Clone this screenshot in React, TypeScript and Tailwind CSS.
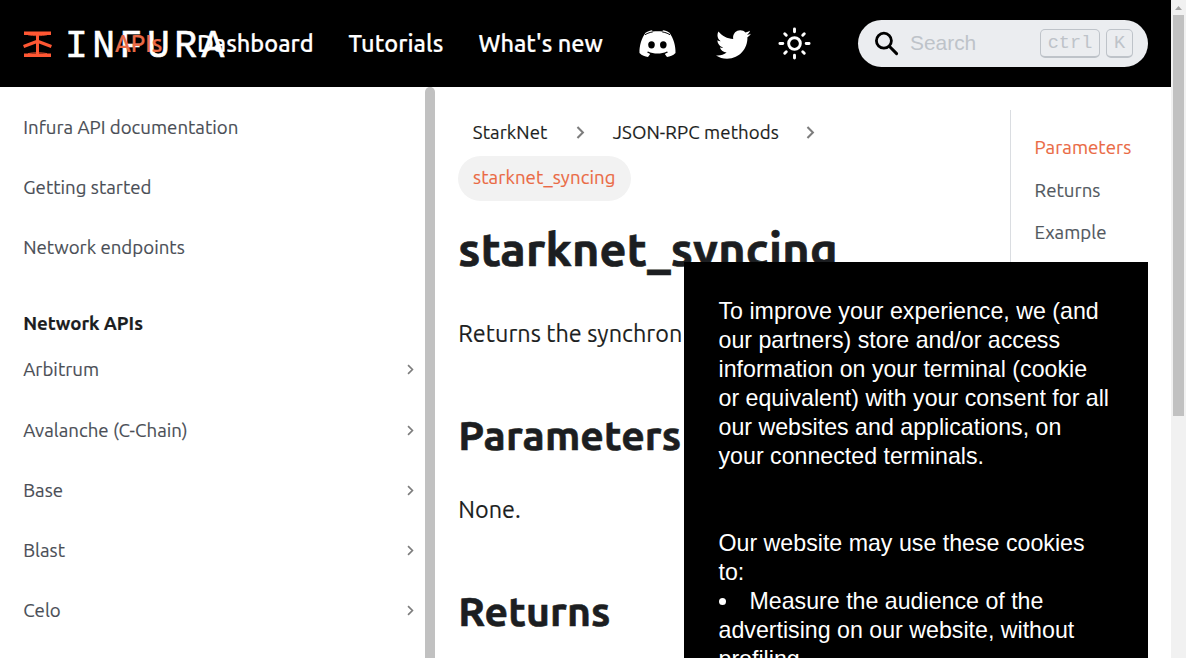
import { FaTwitter } from "react-icons/fa";

const topLinks = [
  { label: "Infura API documentation" },
  { label: "Getting started" },
  { label: "Network endpoints" },
];
const networks = ["Arbitrum", "Avalanche (C-Chain)", "Base", "Blast", "Celo"];

function InfuraMark() {
  return (
    <svg className="h-[26px] w-[30px] shrink-0" viewBox="0 0 30 26" fill="none" stroke="#ff5733" strokeWidth="3.400">
      <path d="M1 2.200H28M1 24.200H28" />
      <path d="M14.500 2V24" strokeWidth="3" />
      <path d="M.6 15.400L14.500 10.300L28.400 15.400" strokeWidth="3.200" />
      <path d="M5 3.800C10 5 19 5 24 3.800M5 22.600C10 21.400 19 21.400 24 22.600" strokeWidth=".8" />
    </svg>
  );
}

function DiscordIcon() {
  return (
    <svg className="h-[27px] w-[37px]" viewBox="0 0 37 27" fill="#fff">
      <path d="M6.500 2.800C9 1.200 11.500 .3 13 .3L13.800 1.500C17 1.100 20 1.100 23.200 1.500L24 .3C26 .3 28.500 1.200 30.500 2.800C34.500 8.500 36.800 16 36.500 23C34 25.500 31 26.700 28 26.900L25.800 24L29 22.200L28 21.400C22 24.100 15 24.100 9 21.400L8 22.200L11.200 24L9 26.900C6 26.700 3 25.500 .5 23C.2 16 2.500 8.500 6.500 2.800Z" />
      <ellipse cx="12.500" cy="14.800" rx="3.300" ry="3.600" fill="#000" />
      <ellipse cx="24.300" cy="14.800" rx="3.300" ry="3.600" fill="#000" />
      <path d="M6 4.700C9 3 11 2.400 13.800 1.900M31 4.700C28 3 26 2.400 23.200 1.900" stroke="#000" strokeWidth="1" fill="none" />
    </svg>
  );
}

function SunIcon() {
  return (
    <svg className="size-[35px]" viewBox="0 0 24 24" fill="none" stroke="#fff" strokeWidth="2" strokeLinecap="round">
      <circle cx="12" cy="12" r="4" />
      <path d="M12 2v2M12 20v2M2 12h2M20 12h2M5.300 5.300l1.060 1.060M17.640 17.640l1.060 1.060M5.300 18.700l1.060-1.060M17.640 6.360l1.060-1.060" />
    </svg>
  );
}

function SearchBox() {
  return (
    <div className="ml-[46px] flex h-[47px] w-[290px] items-center rounded-full bg-[#ebedf0] pl-[16px] pr-[15px] text-[#bec3c9]">
      <svg className="h-[25px] w-[25px]" viewBox="0 0 25 25" fill="none" stroke="#000">
        <circle cx="9.900" cy="9.700" r="7.500" strokeWidth="2.800" />
        <path d="M15.300 15.300L22.600 22.600" strokeWidth="3" strokeLinecap="round" />
      </svg>
      <span className="ml-[11px] flex-1 font-['Liberation_Sans',sans-serif] text-[20.900px] font-normal leading-none">Search</span>
      <div className="flex gap-[6px] font-normal text-[18.600px] leading-[27px]">
        <kbd className="h-[29px] w-[60px] rounded-[5px] border border-b-2 border-[#bec3c9] text-center font-['Liberation_Mono',monospace]">ctrl</kbd>
        <kbd className="h-[29px] w-[27px] rounded-[5px] border border-b-2 border-[#bec3c9] text-center font-['Liberation_Mono',monospace]">K</kbd>
      </div>
    </div>
  );
}

function Header() {
  return (
    <header className="flex h-[87px] items-center bg-black pl-[23px] text-[23.500px] font-medium text-white">
      <div className="flex w-[92px] shrink-0 items-center">
        <InfuraMark />
        <span className="ml-[12px] mt-[6px] whitespace-nowrap font-['Liberation_Mono',monospace] text-[38px] font-normal leading-none tracking-[4.500px] [-webkit-text-stroke:0.600px_white]">INFURA</span>
      </div>
      <nav className="relative flex items-center whitespace-nowrap [-webkit-text-stroke:0.200px_currentColor]">
        <a className="w-[82px] text-[#ea6a45]">APIs</a>
        <a className="w-[151.500px]">Dashboard</a>
        <a className="w-[130px] tracking-[0.060px]">Tutorials</a>
        <a className="w-[160.500px]">What's new</a>
        <DiscordIcon />
        <FaTwitter className="ml-[39.500px] mt-[2px] size-[35px]" />
        <span className="ml-[26.500px]"><SunIcon /></span>
      </nav>
      <SearchBox />
    </header>
  );
}

function Chevron({ className }: { className: string }) {
  return (
    <svg className={className} viewBox="0 0 8 12" fill="none" stroke="#7d7d7d" strokeWidth="1.900">
      <path d="M1.200 1L6.200 6L1.200 11" />
    </svg>
  );
}

function Sidebar() {
  return (
    <aside className="flex w-[435px] shrink-0">
      <div className="flex-1 pt-[10.700px] text-[18.650px] tracking-[0.020px] text-[#4a4e56] [-webkit-text-stroke:0.150px_currentColor]">
        {topLinks.map((l) => (
          <a key={l.label} className="flex h-[60.300px] items-center pl-[23.200px]">{l.label}</a>
        ))}
        <div className="flex h-[61.500px] items-center pl-[23.200px] pt-[29px] font-semibold tracking-[-0.050px] text-[#1c1e21]">Network APIs</div>
        {networks.map((n) => (
          <a key={n} className="flex h-[60.300px] items-center justify-between pl-[23.200px] pr-[11px]">
            {n}
            <Chevron className="mb-[1px] h-[11px] w-[7px]" />
          </a>
        ))}
      </div>
      <div className="w-[10px] rounded-t-[5px] bg-[#c1c1c1]" />
    </aside>
  );
}

function Article() {
  return (
    <article className="w-[552px] shrink-0 pl-[23.300px] pt-[23px] text-[#1c1e21] [-webkit-text-stroke:0.150px_currentColor]">
      <div className="flex h-[45px] items-center text-[18.650px] tracking-[0.080px]">
        <span className="w-[117.500px] pl-[14.500px]">StarkNet</span>
        <Chevron className="h-[13px] w-[9px]" />
        <span className="ml-[28px] w-[193px]">JSON-RPC methods</span>
        <Chevron className="h-[13px] w-[9px]" />
      </div>
      <div className="mt-[1px] flex">
        <span className="-ml-[0.300px] flex h-[45px] items-center rounded-full bg-[#f2f2f2] px-[15px] pb-[2px] text-[18.650px] tracking-[0.090px] text-[#ea6a45]">starknet_syncing</span>
      </div>
      <h1 className="mt-[19px] text-[46.900px] font-bold leading-[58px] tracking-[0.200px] [-webkit-text-stroke:0.700px_currentColor]">starknet_syncing</h1>
      <p className="mt-[36px] w-[224.500px] overflow-hidden whitespace-nowrap text-[23.400px] leading-[38px] tracking-[0.030px]">Returns the synchron</p>
      <h2 className="mt-[58px] text-[41px] font-bold leading-[51px] tracking-[0.080px] [-webkit-text-stroke:0.600px_currentColor]">Parameters</h2>
      <p className="mt-[29px] text-[23.400px] leading-[38px]">None.</p>
      <h2 className="mt-[58px] text-[41px] font-bold leading-[51px] tracking-[0.080px] [-webkit-text-stroke:0.600px_currentColor]">Returns</h2>
    </article>
  );
}

function Contents() {
  return (
    <aside className="ml-[23px] mt-[23px] flex h-[300px] flex-1 flex-col border-l border-[#dadde1] pl-[23.500px] pt-[17px] text-[18.650px] tracking-[0.050px] text-[#525860] [-webkit-text-stroke:0.150px_currentColor]">
      <a className="flex h-[42.500px] items-center text-[#ea6a45]">Parameters</a>
      <a className="flex h-[42.500px] items-center">Returns</a>
      <a className="flex h-[42.500px] items-center">Example</a>
    </aside>
  );
}

function CookieNotice() {
  return (
    <div className="absolute left-[684px] top-[262px] h-[396px] w-[464px] overflow-hidden bg-black pl-[34.500px] pt-[35px] font-['Liberation_Sans',sans-serif] text-[23.200px] leading-[29px] text-white">
      <p>
        To improve your experience, we (and<br />our partners) store and/or access<br />information on your terminal (cookie<br />or equivalent) with your consent for all<br />our websites and applications, on<br />your connected terminals.
      </p>
      <p className="mt-[58px]">Our website may use these cookies<br />to:</p>
      <p className="whitespace-nowrap">
        <span className="mr-[24px] inline-block size-[7px] rounded-full bg-white align-[4px]" />
        Measure the audience of the<br />advertising on our website, without<br />profiling
      </p>
    </div>
  );
}

function PageScrollbar() {
  return (
    <div className="flex w-[15px] shrink-0 flex-col items-center bg-[#f1f1f1]">
      <svg className="h-[15px] w-[15px]" viewBox="0 0 15 15" fill="#a3a3a3">
        <path d="M4 10L7.500 6L11 10Z" />
      </svg>
      <div className="h-[401px] w-[11px] bg-[#c1c1c1]" />
    </div>
  );
}

export default function App() {
  return (
    <div className="relative flex h-[658px] w-[1186px] overflow-hidden bg-white font-['Ubuntu','Noto_Sans',sans-serif]">
      <div className="flex h-full w-[1171px] flex-col">
        <Header />
        <div className="flex min-h-0 flex-1 overflow-hidden">
          <Sidebar />
          <Article />
          <Contents />
        </div>
      </div>
      <PageScrollbar />
      <CookieNotice />
    </div>
  );
}
